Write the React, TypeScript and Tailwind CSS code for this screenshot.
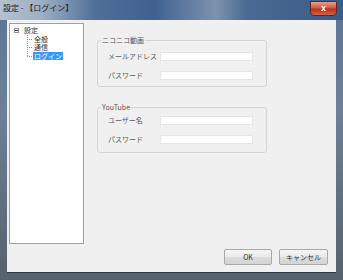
const jp = "font-['Noto_Sans_CJK_JP','Noto_Sans',sans-serif]";

function Row({ label, gap }: { label: string; gap?: boolean }) {
  return (
    <div className={`flex items-center h-[9px] ${gap ? "mt-[10px]" : ""}`}>
      <span className="w-[62px] pl-[10px] text-[7px] leading-none text-[#5a5a5a] whitespace-nowrap">
        {label}
      </span>
      <div className="w-[93px] h-[9px] bg-white border border-[#e2e4e6]" />
    </div>
  );
}

function Group({
  title,
  children,
  pad,
  height,
}: {
  title: string;
  children: React.ReactNode;
  pad: string;
  height: string;
}) {
  return (
    <div
      className={`relative w-[170px] ${height} ${pad} border border-[#d3d6d9] rounded-[3px]`}
    >
      <span className="absolute -top-[5px] left-[3px] px-[1px] bg-[#f0f0f0] text-[7px] leading-[9px] text-[#555]">
        {title}
      </span>
      {children}
    </div>
  );
}

function TreeItem({ label, selected }: { label: string; selected?: boolean }) {
  return (
    <div className="relative flex items-center h-[8.5px] pl-[23px]">
      <div className="absolute left-[17px] top-1/2 w-[5px] border-t border-dotted border-[#8a8a8a]" />
      <span
        className={`text-[7px] leading-[8px] px-[1px] ${
          selected ? "bg-[#3399ff] text-white" : "text-[#333]"
        }`}
      >
        {label}
      </span>
    </div>
  );
}

export default function App() {
  return (
    <div
      className={`relative w-[343px] h-[280px] overflow-hidden ${jp} bg-[linear-gradient(180deg,#5b7596_0%,#6d8096_40%,#56626d_100%)] pt-[20px] pl-[7px]`}
    >
      {/* title bar */}
      <div className="absolute inset-x-0 top-0 h-[20px] bg-[linear-gradient(90deg,#b5c1ce_0%,#9fb0c3_12%,#4f6f98_28%,#3f6191_45%,#7d93ad_63%,#4a6a93_72%,#3b5b88_100%)]" />
      <div className="absolute top-[3px] left-[3px] text-[8px] leading-[10px] text-[#1a1a1a]">
        設定 - 【ログイン】
      </div>
      <div className="absolute top-[1px] left-[310px] w-[27px] h-[15px] rounded-b-[4px] border border-[#5a2a22] bg-[linear-gradient(180deg,#e8a08c_0%,#d2583f_45%,#b9301c_55%,#d5633f_100%)] flex items-center justify-center">
        <span className="text-white text-[9px] leading-none font-bold font-['Liberation_Sans',sans-serif]">
          x
        </span>
      </div>

      {/* client */}
      <div className="relative w-[329px] h-[253px] bg-[#f0f0f0] pt-[3px] pl-[2px] border-b border-[#2c3640]">
        <div className="flex h-[221px]">
          <div className="w-[75px] h-full bg-white border border-[#a0a0a0] pt-[2px]">
            <div className="relative flex items-center h-[8.5px] pl-[13px]">
              <div className="absolute left-[4px] top-[2px] w-[5px] h-[5px] border border-[#919191] bg-white flex items-center justify-center">
                <div className="w-[3px] border-t border-[#333]" />
              </div>
              <span className="text-[7px] leading-[8px] px-[1px] text-[#333]">設定</span>
            </div>
            <div className="relative">
              <div className="absolute left-[17px] top-0 h-[21px] border-l border-dotted border-[#8a8a8a]" />
              <TreeItem label="全般" />
              <TreeItem label="通信" />
              <TreeItem label="ログイン" selected />
            </div>
          </div>

          <div className="ml-[13px] pt-[17px]">
            <Group title="ニコニコ動画" pad="pt-[11px]" height="h-[47px]">
              <Row label="メールアドレス" />
              <Row label="パスワード" gap />
            </Group>
            <div className="mt-[20px]">
              <Group title="YouTube" pad="pt-[8px]" height="h-[46px]">
                <Row label="ユーザー名" />
                <Row label="パスワード" gap />
              </Group>
            </div>
          </div>
        </div>

        <div className="flex justify-end gap-[7px] pr-[8px] mt-[5px]">
          <button className="w-[48px] h-[16px] rounded-[2px] border border-[#a9a9a9] bg-[linear-gradient(180deg,#f4f4f4_0%,#ebebeb_50%,#dcdcdc_51%,#d4d4d4_100%)] text-[7px] leading-none text-[#333]">
            OK
          </button>
          <button className="w-[49px] h-[16px] rounded-[2px] border border-[#a9a9a9] bg-[linear-gradient(180deg,#f4f4f4_0%,#ebebeb_50%,#dcdcdc_51%,#d4d4d4_100%)] text-[7px] leading-none text-[#333]">
            キャンセル
          </button>
        </div>
      </div>
    </div>
  );
}
